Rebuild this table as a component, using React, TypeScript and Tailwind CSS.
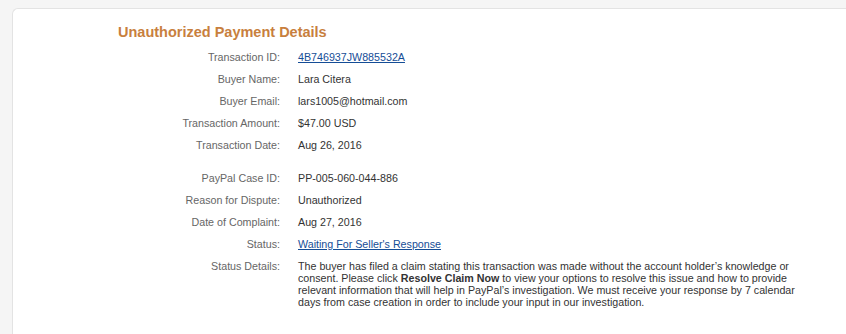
import React from 'react'

type Row = { label: string; value: React.ReactNode }

const link = 'text-[#154d96] underline underline-offset-[1px]'

const payment: Row[] = [
  { label: 'Transaction ID:', value: <a href="#" className={link}>4B746937JW885532A</a> },
  { label: 'Buyer Name:', value: 'Lara Citera' },
  { label: 'Buyer Email:', value: 'lars1005@hotmail.com' },
  { label: 'Transaction Amount:', value: '$47.00 USD' },
  { label: 'Transaction Date:', value: 'Aug 26, 2016' },
]

const dispute: Row[] = [
  { label: 'PayPal Case ID:', value: 'PP-005-060-044-886' },
  { label: 'Reason for Dispute:', value: 'Unauthorized' },
  { label: 'Date of Complaint:', value: 'Aug 27, 2016' },
  { label: 'Status:', value: <a href="#" className={link}>Waiting For Seller's Response</a> },
  {
    label: 'Status Details:',
    value: (
      <p className="max-w-[500px] leading-[12px]">
        The buyer has filed a claim stating this transaction was made without the account holder’s knowledge or
        consent. Please click <b className="font-bold">Resolve Claim Now</b> to view your options to resolve this
        issue and how to provide relevant information that will help in PayPal’s investigation. We must receive
        your response by 7 calendar days from case creation in order to include your input in our investigation.
      </p>
    ),
  },
]

function DetailRows({ rows }: { rows: Row[] }) {
  return (
    <div className="grid grid-cols-[162px_1fr] gap-x-[18px] gap-y-[10px]">
      {rows.map((r) => (
        <React.Fragment key={r.label}>
          <div className="text-right text-[#666]">{r.label}</div>
          <div className="text-[#333]">{r.value}</div>
        </React.Fragment>
      ))}
    </div>
  )
}

export default function App() {
  return (
    <div className="h-[334px] overflow-hidden bg-[#f5f5f5] pt-2 pl-3 font-['Liberation_Sans',Arial,sans-serif]">
      <div className="h-[400px] rounded-tl-md border border-r-0 border-[#e3e3e3] bg-white pl-[105px] pt-[14px]">
        <h2 className="text-[14.5px] leading-[18px] font-bold text-[#c87f3e]">Unauthorized Payment Details</h2>
        <div className="mt-[10px] text-[10.7px] leading-[12px]">
          <DetailRows rows={payment} />
          <div className="mt-[21px]">
            <DetailRows rows={dispute} />
          </div>
        </div>
      </div>
    </div>
  )
}
